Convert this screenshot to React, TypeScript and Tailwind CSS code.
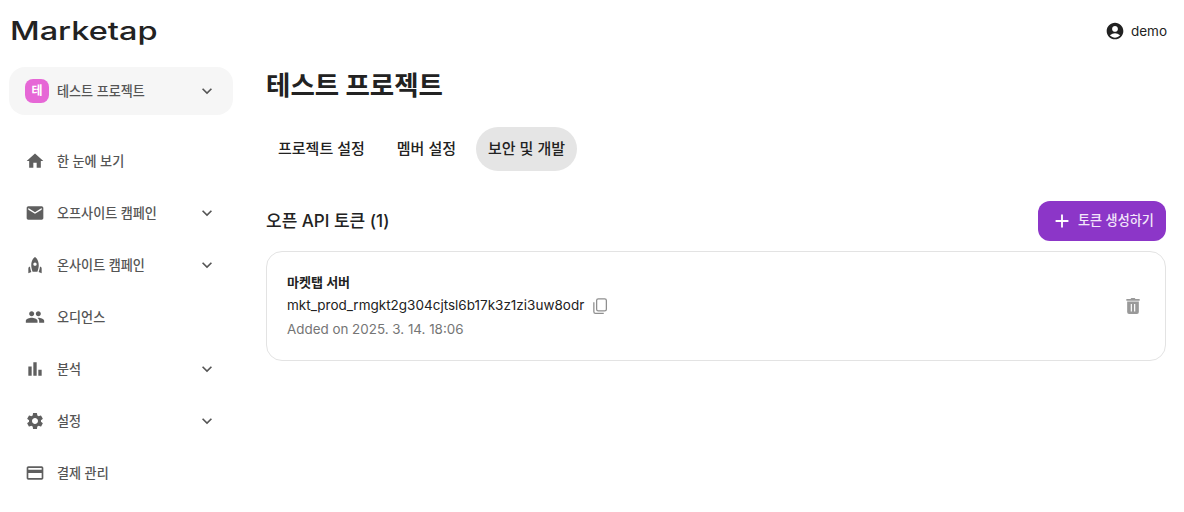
import {
  MdAccountCircle,
  MdAdd,
  MdBarChart,
  MdCreditCard,
  MdEmail,
  MdExpandMore,
  MdHome,
  MdPeople,
  MdRocket,
  MdSettings,
} from 'react-icons/md';
import type { IconType } from 'react-icons';

type NavItem = { label: string; icon: IconType; more?: boolean };

const navItems: NavItem[] = [
  { label: '한 눈에 보기', icon: MdHome },
  { label: '오프사이트 캠페인', icon: MdEmail, more: true },
  { label: '온사이트 캠페인', icon: MdRocket, more: true },
  { label: '오디언스', icon: MdPeople },
  { label: '분석', icon: MdBarChart, more: true },
  { label: '설정', icon: MdSettings, more: true },
  { label: '결제 관리', icon: MdCreditCard },
];

const tabs = ['프로젝트 설정', '멤버 설정', '보안 및 개발'];

const CopyIcon = () => (
  <svg width="18" height="18" viewBox="0 0 24 24" fill="none" stroke="#8f8f8f" strokeWidth="1.7" className="ml-[7px]">
    <rect x="7.5" y="2.5" width="13" height="16" rx="2.2" />
    <path d="M3.8 7v12.5a2.2 2.2 0 0 0 2.2 2.2h11" />
  </svg>
);

const TrashIcon = () => (
  <svg width="20" height="20" viewBox="0 0 24 24" fill="#999">
    <path d="M4 3.5H9l1-1h4l1 1h5v2.2H4z" />
    <path
      fillRule="evenodd"
      d="M5 6.5h14v12.7a2.3 2.3 0 0 1-2.3 2.3H7.3A2.3 2.3 0 0 1 5 19.2zM9.3 9.5v9h1.4v-9zm4 0v9h1.4v-9z"
    />
  </svg>
);

const Sidebar = () => (
  <aside className="w-[242px] shrink-0 flex flex-col pl-[9px]">
    <div className="h-[62px] flex items-center pl-px">
      <span className="text-[25px] leading-none font-medium text-[#222] origin-left scale-x-[1.3]">
        Marketap
      </span>
    </div>
    <div className="mt-[5px] w-[224px] h-12 rounded-2xl bg-[#f6f6f6] flex items-center pl-4 pr-4">
      <div className="w-6 h-6 rounded-lg bg-[#e667d6] text-white text-xs font-semibold flex items-center justify-center">
        테
      </div>
      <span className="ml-2 pt-px flex-1 text-[13.1px] font-medium text-[#555]">테스트 프로젝트</span>
      <MdExpandMore size={20} className="text-[#555]" />
    </div>
    <nav className="mt-5 flex flex-col">
      {navItems.map((item) => (
        <div key={item.label} className="w-[224px] h-[52px] flex items-center pl-4 pr-4">
          <item.icon size={20} className="text-[#5f5f5f]" />
          <span className="ml-3 pt-px flex-1 text-[13.1px] font-medium text-[#555]">{item.label}</span>
          {item.more && <MdExpandMore size={20} className="text-[#555]" />}
        </div>
      ))}
    </nav>
  </aside>
);

const TokenCard = () => (
  <div className="mt-[10px] h-[110px] rounded-2xl border border-[#e3e3e3] flex items-center justify-between pl-5 pr-[22px]">
    <div className="flex flex-col pb-[2px]">
      <span className="text-[13px] leading-[20px] font-semibold text-[#222]">마켓탭 서버</span>
      <div className="mt-1 flex items-center h-5">
        <span className="text-[13.5px] text-[#222]">mkt_prod_rmgkt2g304cjtsl6b17k3z1zi3uw8odr</span>
        <CopyIcon />
      </div>
      <span className="mt-[3px] text-[13.4px] leading-5 text-[#757575]">Added on 2025. 3. 14. 18:06</span>
    </div>
    <TrashIcon />
  </div>
);

export default function App() {
  return (
    <div className="w-[1184px] h-[512px] overflow-hidden bg-white flex font-['Inter','Noto_Sans_CJK_KR',sans-serif]">
      <Sidebar />
      <main className="flex-1 flex flex-col pl-6 pr-[18px]">
        <div className="h-[62px] -mr-px flex items-center justify-end gap-[6px]">
          <MdAccountCircle size={20} className="text-[#222]" />
          <span className="text-[13.5px] text-[#222]">demo</span>
        </div>
        <h1 className="mt-[4px] text-[26.5px] leading-[38px] font-bold text-[#222]">테스트 프로젝트</h1>
        <div className="mt-[23px] flex items-center gap-2">
          {tabs.map((tab) => (
            <div
              key={tab}
              className={`h-11 px-3 rounded-[22px] flex items-center text-[15px] font-medium text-[#222] ${tab === '보안 및 개발' ? 'bg-[#e5e5e5]' : ''}`}
            >
              {tab}
            </div>
          ))}
        </div>
        <div className="mt-[30px] h-10 flex items-center justify-between">
          <h2 className="pt-px text-[17px] font-medium text-[#222]">오픈 API 토큰 (1)</h2>
          <button className="h-10 w-[128px] rounded-xl bg-[#8c36c8] flex items-center pl-[13px] text-[13.1px] font-medium text-[#f3e6fa]">
            <MdAdd size={22} className="text-white" />
            <span className="ml-[5px]">토큰 생성하기</span>
          </button>
        </div>
        <TokenCard />
      </main>
    </div>
  );
}
